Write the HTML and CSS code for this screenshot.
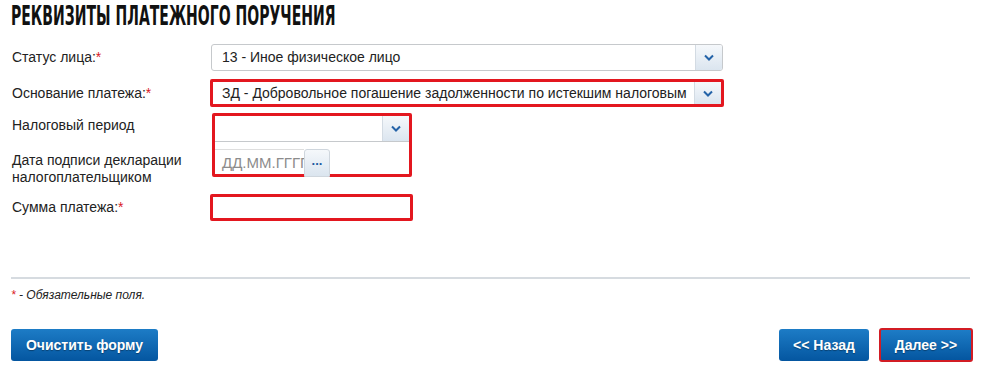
FILE: index.html
```html
<!DOCTYPE html>
<html lang="ru">
<head>
  <meta charset="UTF-8">
  <title>Реквизиты платежного поручения</title>
  <link rel="stylesheet" href="styles.css">
</head>
<body>
  <div id="page">
    <h1 class="title">РЕКВИЗИТЫ ПЛАТЕЖНОГО ПОРУЧЕНИЯ</h1>

    <div class="form">
      <div class="row row-status">
        <div class="label">Статус лица:<span class="req">*</span></div>
        <div class="select select-status">
          <span class="select-text">13 - Иное физическое лицо</span>
          <span class="select-btn"><svg width="10" height="7" viewBox="0 0 10 7"><path d="M1 1.5 L5 5.5 L9 1.5" fill="none" stroke="#2463a8" stroke-width="2"/></svg></span>
        </div>
      </div>

      <div class="row row-basis">
        <div class="label">Основание платежа:<span class="req">*</span></div>
        <div class="hl hl-basis">
          <div class="select select-inner">
            <span class="select-text">ЗД - Добровольное погашение задолженности по истекшим налоговым</span>
            <span class="select-btn"><svg width="10" height="7" viewBox="0 0 10 7"><path d="M1 1.5 L5 5.5 L9 1.5" fill="none" stroke="#2463a8" stroke-width="2"/></svg></span>
          </div>
        </div>
      </div>

      <div class="row row-period">
        <div class="labels">
          <div class="label label-period">Налоговый период</div>
          <div class="label label-date">Дата подписи декларации<br>налогоплательщиком</div>
        </div>
        <div class="hl hl-period">
          <div class="select select-period">
            <span class="select-text"></span>
            <span class="select-btn"><svg width="10" height="7" viewBox="0 0 10 7"><path d="M1 1.5 L5 5.5 L9 1.5" fill="none" stroke="#2463a8" stroke-width="2"/></svg></span>
          </div>
          <div class="date">
            <span class="date-input">ДД.ММ.ГГГГ</span>
            <span class="date-btn">...</span>
          </div>
        </div>
      </div>

      <div class="row row-sum">
        <div class="label">Сумма платежа:<span class="req">*</span></div>
        <div class="hl hl-sum"></div>
      </div>
    </div>

    <div class="divider"></div>
    <p class="note"><span class="req">*</span> - Обязательные поля.</p>

    <div class="actions">
      <span class="btn btn-clear">Очистить форму</span>
      <div class="nav">
        <span class="btn btn-back">&lt;&lt; Назад</span>
        <span class="btn btn-next">Далее &gt;&gt;</span>
      </div>
    </div>
  </div>
</body>
</html>
```

FILE: styles.css
```css
body{
  margin: 0;
  background: #fff;
  font-family: "Liberation Sans", Arial, sans-serif;
  font-size: 14px;
  color: #222;
}

#page{
  width: 962px;
  padding: 0 0 0 11px;
}

.title{
  margin: 0;
  padding-top: 2px;
  height: 28px;
  font-family: "DejaVu Sans Condensed", "DejaVu Sans", sans-serif;
  font-stretch: condensed;
  font-weight: bold;
  font-size: 26px;
  line-height: 28px;
  color: #111;
  transform: scaleX(0.6);
  transform-origin: left center;
  white-space: nowrap;
}

.form{
  padding-left: 1px;
}

.row{
  display: flex;
  align-items: center;
}

.label{
  width: 198px;
  flex: none;
  line-height: 17px;
}

.req{
  color: #d9191f;
}

.row-status{
  margin-top: 14px;
  height: 27px;
}

.row-basis{
  margin-top: 8px;
  height: 28px;
}

.row-period{
  margin-top: 6px;
  height: 64px;
  align-items: flex-start;
}

.row-sum{
  margin-top: 17px;
  height: 27px;
}

.labels{
  width: 198px;
  flex: none;
}

.label-period{
  margin-top: 4px;
}

.label-date{
  margin-top: 18px;
}

/* select */
.select{
  display: flex;
  box-sizing: border-box;
  border: 1px solid #c6c9cc;
  border-radius: 3px;
  background: #fff;
  overflow: hidden;
}

.select-text{
  flex: 1;
  padding-left: 10px;
  line-height: 25px;
  white-space: nowrap;
  overflow: hidden;
}

.select-btn{
  width: 26px;
  flex: none;
  display: flex;
  align-items: center;
  justify-content: center;
  border-left: 1px solid #d3dbe3;
  background: linear-gradient(#f5f8fb, #dbe5ef);
}

.select-status{
  margin-left: 1px;
  width: 512px;
  height: 27px;
}

.hl{
  box-sizing: border-box;
  border: 3px solid #e3171f;
  border-radius: 2px;
}

.hl-basis{
  width: 514px;
  height: 28px;
}

.select-inner{
  height: 22px;
  border: none;
  border-radius: 0;
}

.select-inner .select-text{
  line-height: 22px;
  padding-left: 9px;
}

.hl-period{
  margin-left: 2px;
  width: 200px;
  height: 64px;
}

.select-period{
  height: 26px;
  border: none;
  border-bottom: 1px solid #c6c9cc;
  border-radius: 0;
}

.date{
  display: flex;
  margin-top: 7px;
  height: 28px;
}

.date-input{
  width: 89px;
  box-sizing: border-box;
  padding-left: 7px;
  font-size: 15px;
  line-height: 26px;
  color: #8c8c8c;
  white-space: nowrap;
  overflow: hidden;
  border-top: 1px solid #dedede;
}

.date-btn{
  width: 26px;
  box-sizing: border-box;
  border: 1px solid #cfd6dd;
  border-radius: 3px 3px 0 0;
  background: linear-gradient(#f5f8fb, #dbe5ef);
  color: #1d5aa0;
  font-weight: bold;
  font-size: 13px;
  text-align: center;
  line-height: 22px;
  letter-spacing: 0;
}

.hl-sum{
  width: 203px;
  height: 27px;
}

.divider{
  margin-top: 56px;
  width: 959px;
  height: 2px;
  background: #d6dbe0;
}

.note{
  margin: 8px 0 0;
  font-size: 12px;
  font-style: italic;
  line-height: 16px;
  color: #222;
}

.actions{
  display: flex;
  justify-content: space-between;
  margin-top: 26px;
  width: 962px;
}

.nav{
  display: flex;
  gap: 10px;
}

.btn{
  display: block;
  box-sizing: border-box;
  height: 32px;
  padding: 0 14px;
  border-radius: 3px;
  background: linear-gradient(#1d7cc6, #0456a0);
  color: #fff;
  font-weight: bold;
  font-size: 14px;
  line-height: 32px;
  text-align: center;
  text-shadow: 0 1px 1px rgba(0,0,0,0.35);
}

.btn-clear{
  width: 147px;
  padding: 0;
}

.btn-back{
  width: 90px;
  padding: 0;
}

.btn-next{
  width: 94px;
  height: 34px;
  margin-top: -1px;
  padding: 0;
  border: 2px solid #d21c24;
  line-height: 30px;
}
```
